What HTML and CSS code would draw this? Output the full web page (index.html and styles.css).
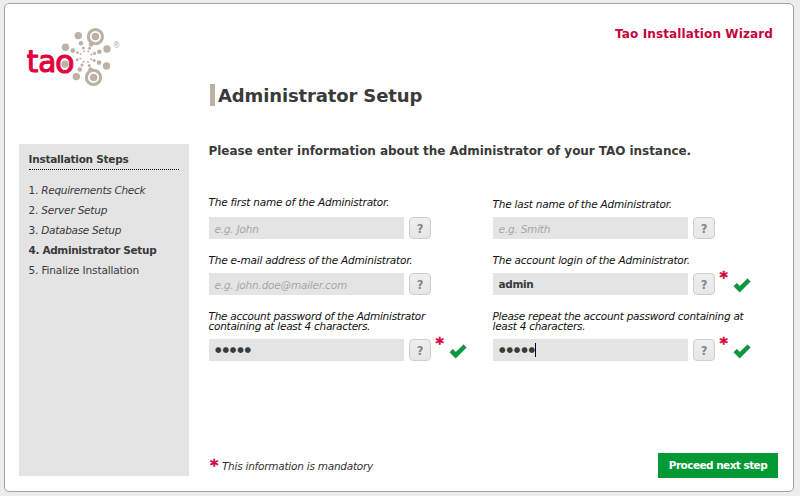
FILE: index.html
```html
<!DOCTYPE html>
<html lang="en">
<head>
<meta charset="utf-8">
<title>Tao Installation Wizard</title>
<link rel="stylesheet" href="styles.css">
</head>
<body>
<div class="window">
  <header class="header">
    <svg class="logo" width="105" height="75" viewBox="0 0 105 75" role="img" aria-label="tao">
      <g fill="#bbb1a4">
        <circle cx="58.3" cy="15.6" r="3.7"/><circle cx="61" cy="23.2" r="2.2"/><circle cx="63.3" cy="28" r="1.5"/><circle cx="64" cy="31.4" r="1"/>
        <circle cx="45.5" cy="27.3" r="3.7"/><circle cx="52.8" cy="30.6" r="2.4"/><circle cx="57.5" cy="32.6" r="1.4"/><circle cx="60.5" cy="34" r="1"/>
        <circle cx="87" cy="29" r="3.7"/><circle cx="79.3" cy="31.8" r="2.3"/><circle cx="74.5" cy="33.4" r="1.6"/><circle cx="71.3" cy="34.6" r="1"/>
        <circle cx="86.5" cy="46" r="3.7"/><circle cx="79" cy="42.6" r="2.3"/><circle cx="74.2" cy="40.5" r="1.5"/><circle cx="71.2" cy="39.2" r="1"/>
        <circle cx="56.3" cy="56.6" r="3.7"/><circle cx="59.8" cy="49.5" r="2.3"/><circle cx="62" cy="45" r="1.6"/><circle cx="63.4" cy="41.8" r="1"/>
        <circle cx="71" cy="24.4" r="2.3"/><circle cx="69.6" cy="28.3" r="1.5"/><circle cx="68.2" cy="31.5" r="1"/>
        <circle cx="70.6" cy="49.6" r="2.3"/><circle cx="69.2" cy="45.4" r="1.5"/><circle cx="68" cy="42" r="1"/>
        <circle cx="57.2" cy="39.7" r="1.5"/><circle cx="60.4" cy="38.5" r="1"/>
        <circle cx="45" cy="44.2" r="3.6"/><circle cx="75.4" cy="16.5" r="3.8"/><circle cx="73.6" cy="57.4" r="3.7"/>
      </g>
      <g fill="none" stroke="#bbb1a4" stroke-width="3.1">
        <circle cx="75.4" cy="16.6" r="7.1"/><circle cx="73.5" cy="57.4" r="7.1"/>
      </g>
      <text class="wordmark" x="6.8 18.2" y="51.9">ta<tspan class="wordmark-o" x="34.9" y="52.9">o</tspan></text>
      <text class="registered" x="92.4" y="28.3">®</text>
    </svg>
    <div class="product">Tao Installation Wizard</div>
  </header>
  <h1 class="title">Administrator Setup</h1>
  <div class="body">
    <aside class="sidebar">
      <h2 class="sidebar-title">Installation Steps</h2>
      <ol class="steps">
        <li>1. <i class="tight">Requirements Check</i></li>
        <li>2. <i>Server Setup</i></li>
        <li>3. <i class="tight">Database Setup</i></li>
        <li class="current tight">4. Administrator Setup</li>
        <li class="last">5. Finalize Installation</li>
      </ol>
    </aside>
    <main class="main">
      <p class="intro">Please enter information about the Administrator of your TAO instance.</p>
      <div class="form">
        <div class="field raised">
          <label>The first name of the Administrator.</label>
          <div class="control"><span class="input hint">e.g. John</span><span class="help">?</span></div>
        </div>
        <div class="field">
          <label>The last name of the Administrator.</label>
          <div class="control"><span class="input hint">e.g. Smith</span><span class="help">?</span></div>
        </div>
        <div class="field">
          <label>The e-mail address of the Administrator.</label>
          <div class="control"><span class="input hint">e.g. john.doe@mailer.com</span><span class="help">?</span></div>
        </div>
        <div class="field">
          <label>The account login of the Administrator.</label>
          <div class="control"><span class="input tight">admin</span><span class="help">?</span><span class="star">*</span><svg class="check" width="18" height="15" viewBox="0 0 18 15"><path d="M.8 8.2 3.8 5.2 6.8 8.2 14.5.8 17.3 3.5 6.7 14.2Z"/></svg></div>
        </div>
        <div class="field">
          <label class="long">The account password of the Administrator<br>containing at least 4 characters.</label>
          <div class="control"><span class="input password">●●●●●</span><span class="help">?</span><span class="star">*</span><svg class="check" width="18" height="15" viewBox="0 0 18 15"><path d="M.8 8.2 3.8 5.2 6.8 8.2 14.5.8 17.3 3.5 6.7 14.2Z"/></svg></div>
        </div>
        <div class="field">
          <label class="long">Please repeat the account password containing at<br>least 4 characters.</label>
          <div class="control"><span class="input password">●●●●●<span class="caret"></span></span><span class="help">?</span><span class="star">*</span><svg class="check" width="18" height="15" viewBox="0 0 18 15"><path d="M.8 8.2 3.8 5.2 6.8 8.2 14.5.8 17.3 3.5 6.7 14.2Z"/></svg></div>
        </div>
      </div>
      <footer class="footer">
        <p class="mandatory"><span class="star">*</span><i>This information is mandatory</i></p>
        <button class="next">Proceed next step</button>
      </footer>
    </main>
  </div>
</div>
</body>
</html>
```
FILE: styles.css
```css
* { box-sizing: border-box; margin: 0; padding: 0; }
body {
  height: 496px;
  padding: 3px 6px 4px 4px;
  overflow: hidden;
  background: #ededed;
  color: #3a3a3a;
  font: 10.5px/20px "DejaVu Sans", Verdana, sans-serif;
  letter-spacing: -0.2px;
}
.window {
  width: 790px;
  height: 489px;
  border: 1px solid #a3a3a3;
  border-radius: 5px;
  background: #fff;
}
.header {
  display: flex;
  justify-content: space-between;
  height: 78px;
  padding: 16px 20px 0 15px;
}
.logo { flex: none; }
.wordmark { fill: #e2003d; stroke: #e2003d; stroke-width: 1.1; font-size: 29.5px; letter-spacing: 0; }
.wordmark-o { font-size: 32px; stroke-width: 1; }
.registered { fill: #bbb1a4; font-size: 8px; letter-spacing: 0; }
.product { margin-top: 4px; line-height: 20px; font-size: 12px; font-weight: bold; letter-spacing: 0.12px; color: #c8003c; }
.title {
  height: 22px;
  margin: 2px 0 38px 205px;
  padding-left: 3px;
  border-left: 5px solid #bbb1a4;
  line-height: 23px;
  font-size: 18px;
  font-weight: bold;
  letter-spacing: -0.13px;
}
.body { display: flex; gap: 19px; padding-left: 14px; }
.sidebar { width: 170px; height: 332px; padding: 6px 9px 0 9.5px; background: #e4e4e4; }
.sidebar-title { height: 20px; margin-right: 1px; font-size: 10.5px; line-height: 19px; letter-spacing: -0.25px; border-bottom: 1px dotted #000; }
.steps { list-style: none; margin-top: 10px; }
.current { font-weight: bold; }
.last { letter-spacing: -0.14px; }
.tight { letter-spacing: -0.35px; }
.steps i.tight { letter-spacing: -0.3px; }
.main { width: 570px; height: 334px; display: flex; flex-direction: column; }
.intro { height: 53px; padding-left: .5px; line-height: 14px; font-size: 12px; font-weight: bold; letter-spacing: -0.05px; }
.form { display: grid; grid-template-columns: 284px 284px; row-gap: 16px; }
.field { display: flex; flex-direction: column; justify-content: flex-end; }
label { padding: 0 0 8px .5px; font-style: italic; line-height: 10px; color: #111; white-space: nowrap; }
.long { letter-spacing: -0.26px; }
.raised label { padding-bottom: 10px; }
.control { display: flex; height: 22px; padding-left: 1px; }
.input {
  display: flex;
  align-items: center;
  width: 195px;
  padding: 0 0 0 5.5px;
  background: #e4e4e4;
  font-weight: bold;
}
.hint { padding-top: 1px; color: #a6a6a6; font-style: italic; font-weight: normal; }
.password { padding-left: 6px; font-size: 7.5px; letter-spacing: 0.85px; }
.caret { width: 1px; height: 14px; margin-left: -1px; background: #000; }
.help {
  width: 22px;
  margin-left: 5px;
  border: 1px solid #cfcfcf;
  border-radius: 4px;
  background: linear-gradient(#efefef, #e6e6e6);
  color: #858585;
  font-size: 11.5px;
  font-weight: bold;
  line-height: 22px;
  text-align: center;
}
.star { color: #d4063f; font-size: 16px; font-weight: bold; line-height: 16px; letter-spacing: 0; -webkit-text-stroke: .5px #d4063f; }
.control .star { margin: -3px 0 0 4.5px; }
.check { margin: 5px 0 0 5.5px; fill: #009b3a; stroke: #557a55; stroke-width: .6; }
.footer { display: flex; justify-content: space-between; margin-top: auto; height: 25px; }
.mandatory { display: flex; padding-left: 2px; line-height: 27px; letter-spacing: -0.24px; color: #333; }
.mandatory .star { margin: 5px 3.5px 0 0; }
.next { width: 120px; height: 25px; border: 0; background: #009933; color: #fff; font: bold 10.5px/25px "DejaVu Sans", Verdana, sans-serif; letter-spacing: -0.55px; }
```
